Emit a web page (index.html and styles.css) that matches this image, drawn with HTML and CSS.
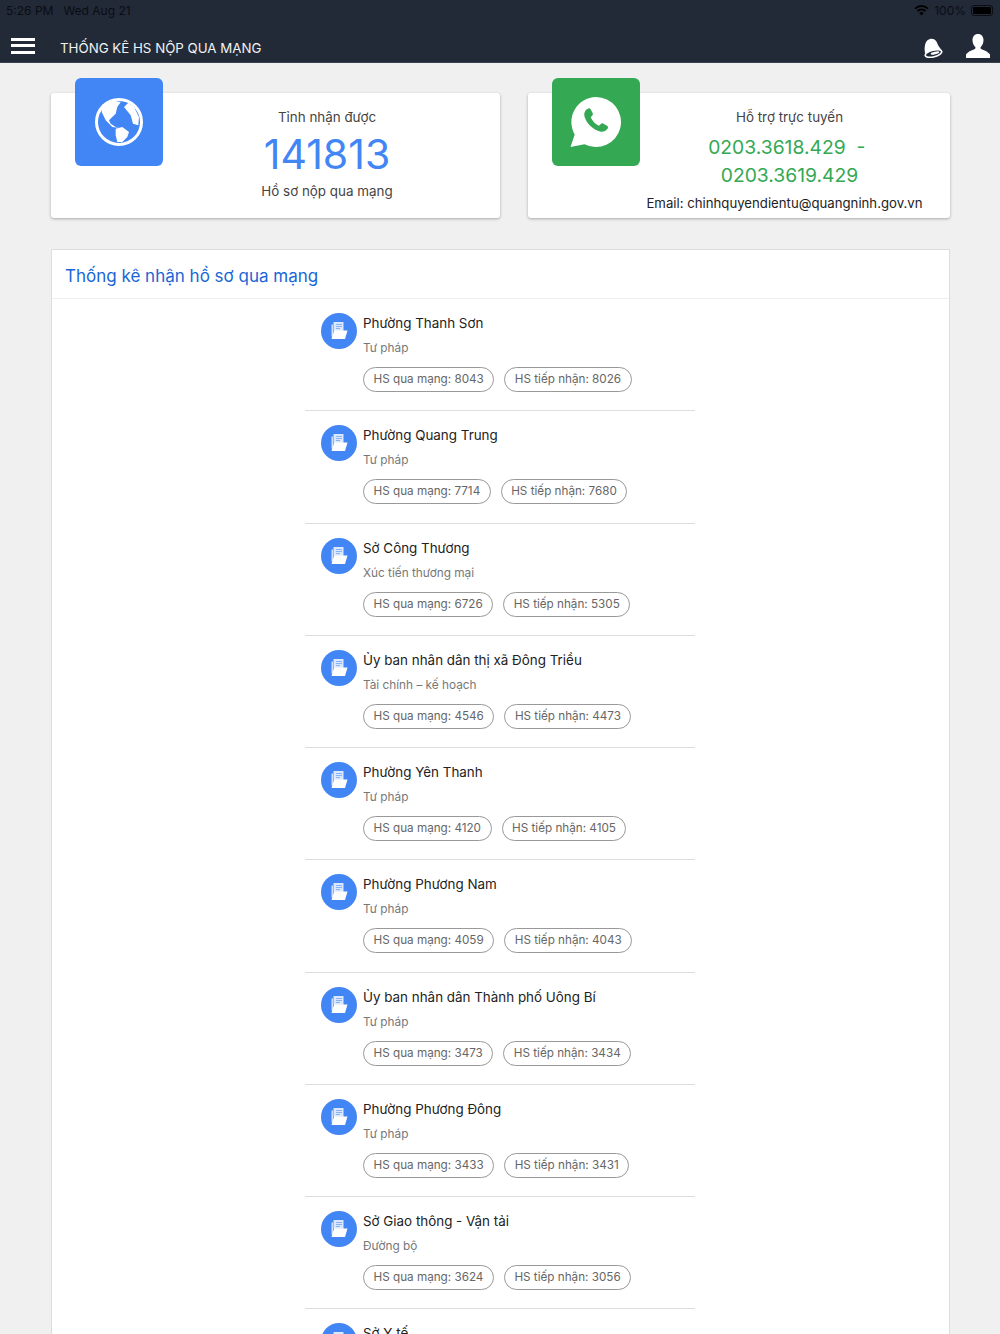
FILE: index.html
```html
<!DOCTYPE html>
<html lang="vi">
<head>
  <meta charset="UTF-8" />
  <title>Thống kê HS nộp qua mạng</title>
  <link rel="stylesheet" href="styles.css">
</head>
<body>

  <!-- Top bar -->
  <header class="topbar">
    <div class="status-bar">
      <span class="status-time">5:26 PM</span>
      <span class="status-date">Wed Aug 21</span>
      <span class="status-right">
        <svg class="wifi" viewBox="0 0 16 12" width="15" height="11"><path d="M8 11.500 5.600 8.700a3.400 3.400 0 0 1 4.800 0zM4.400 7.400 3 5.900a7 7 0 0 1 10 0l-1.400 1.500a5 5 0 0 0-7.200 0zM1.800 4.700.4 3.200a10.800 10.800 0 0 1 15.200 0l-1.400 1.500a8.800 8.800 0 0 0-12.400 0z" fill="#000"/></svg>
        <span>100%</span>
        <span class="battery"><span class="battery-fill"></span></span>
      </span>
    </div>
    <div class="nav-bar">
      <div class="menu-btn"><span></span><span></span><span></span></div>
      <div class="nav-title">THỐNG KÊ HS NỘP QUA MẠNG</div>
      <svg class="bell" viewBox="0 0 20 20" width="20" height="20">
        <path d="M2 15C1 9 2 2 7 1c5-1 7 3 8 6 1 2 3 4 4 6z" fill="#fff"/>
        <ellipse cx="10.500" cy="15.500" rx="8.500" ry="3.400" transform="rotate(-14 10.500 15.500)" fill="#222a38" stroke="#fff" stroke-width="1.600"/>
        <ellipse cx="12" cy="15" rx="4.500" ry="1.200" transform="rotate(-14 12 15)" fill="#fff"/>
      </svg>
      <svg class="user" viewBox="0 0 24 24" width="24" height="24">
        <path d="M12 0c3.600 0 5.500 2.700 5.500 6 0 2.800-1 5.300-2.700 7-.6.700-.4 1.600.4 2 2.500 1.200 7 2.600 8.800 5.600V24H0v-3.400c1.800-3 6.300-4.400 8.800-5.600.8-.4 1-1.300.4-2-1.700-1.700-2.700-4.200-2.700-7 0-3.300 1.900-6 5.500-6z" fill="#fff"/>
      </svg>
    </div>
  </header>

  <main class="content">

    <!-- Summary cards -->
    <section class="cards">
      <div class="card card-blue">
        <div class="card-tile tile-blue">
          <svg viewBox="0 0 48 48" width="48" height="48">
            <circle cx="24" cy="24" r="22.500" fill="none" stroke="#fff" stroke-width="3"/>
            <path d="M7.300 6.700 15.700 2.300 25.700 4 22.300 9 20.700 15.700 17.300 19 14 22.300 15.700 25.700 20.700 29 24.700 30 17.300 29 10.700 22.300 6.700 14z" fill="#fff"/>
            <path d="M20.700 30.700 27.300 29 34 34 32.300 39 27.300 44 22.300 44 20.700 37.300z" fill="#fff"/>
            <path d="M33.300 4.700 39 9 44 19 43.300 27.300 38 25.700 35.700 17.300 29 9z" fill="#fff"/>
          </svg>
        </div>
        <div class="card-body">
          <div class="card-label">Tỉnh nhận được</div>
          <div class="card-number">141813</div>
          <div class="card-label">Hồ sơ nộp qua mạng</div>
        </div>
      </div>

      <div class="card card-green">
        <div class="card-tile tile-green">
          <svg viewBox="0 0 52 52" width="52" height="52">
            <path d="M26 1a25 25 0 1 1-11.500 47.200L.5 51l4.200-12.500A25 25 0 0 1 26 1z" fill="#fff"/>
            <path d="M17.500 13c1-1 2.500-1 3.200.3l2 4c.4.800.2 1.600-.4 2.200l-1.600 1.700c1.500 3.500 4.500 6.800 8.300 8.500l1.800-1.800c.6-.6 1.400-.7 2.200-.3l4 2.200c1.200.7 1.300 2 .5 3-2 2.600-4.500 3.600-7.500 2.700-7.500-2.300-13.500-8-15.500-15-.8-3 .2-5.500 2.500-7.500z" fill="#34a853"/>
          </svg>
        </div>
        <div class="card-body">
          <div class="card-label">Hỗ trợ trực tuyến</div>
          <div class="card-phone">0203.3618.429&nbsp; -&nbsp;<br>0203.3619.429</div>
          <div class="card-email">Email: chinhquyendientu@quangninh.gov.vn</div>
        </div>
      </div>
    </section>

    <!-- Statistic list -->
    <section class="panel">
      <h2 class="panel-title">Thống kê nhận hồ sơ qua mạng</h2>
      <ul class="stat-list" id="stat-list"></ul>
    </section>
  </main>

  <script>
    const rows = [
      ["Phường Thanh Sơn", "Tư pháp", 8043, 8026],
      ["Phường Quang Trung", "Tư pháp", 7714, 7680],
      ["Sở Công Thương", "Xúc tiến thương mại", 6726, 5305],
      ["Ủy ban nhân dân thị xã Đông Triều", "Tài chính – kế hoạch", 4546, 4473],
      ["Phường Yên Thanh", "Tư pháp", 4120, 4105],
      ["Phường Phương Nam", "Tư pháp", 4059, 4043],
      ["Ủy ban nhân dân Thành phố Uông Bí", "Tư pháp", 3473, 3434],
      ["Phường Phương Đông", "Tư pháp", 3433, 3431],
      ["Sở Giao thông - Vận tải", "Đường bộ", 3624, 3056],
      ["Sở Y tế"]
    ];

    const folderIcon = `<svg viewBox="0 0 20 20" width="20" height="20">
        <path d="M2.500 3.500h1.500v12H2.500z" fill="#cfe0fc"/>
        <path d="M4.500 1h10v9h-10z" fill="#dbe7fd"/>
        <path d="M7 3.500h6M7 5.500h6M7 7.500h4" stroke="#8ab4f8" stroke-width="1"/>
        <path d="M5 9.500h13.500L16 18H2.500z" fill="#fff"/>
      </svg>`;

    // Build the rows (the last one is cut off by the window, name only)
    let output = "";
    rows.forEach((r) => {
      let details = "";
      if (r.length > 1) {
        details = `<div class="stat-field">${r[1]}</div>
            <div class="stat-pills">
              <span class="pill">HS qua mạng: ${r[2]}</span>
              <span class="pill">HS tiếp nhận: ${r[3]}</span>
            </div>`;
      }
      output += `<li class="stat-item">
          <div class="stat-icon">${folderIcon}</div>
          <div class="stat-text">
            <div class="stat-name">${r[0]}</div>
            ${details}
          </div>
        </li>`;
    });
    document.getElementById("stat-list").innerHTML = output;
  </script>
</body>
</html>
```

FILE: styles.css
```css
/* Basic Reset */
* {
  margin: 0;
  padding: 0;
  box-sizing: border-box;
}

html, body {
  height: 1334px;
  overflow: hidden;
}

body {
  font-family: Inter, "Noto Sans", Arial, sans-serif;
  background: #f0f0f0;
  color: #333;
}

/* Top bar */
.topbar {
  height: 63px;
  background: #222a38;
  border-bottom: 1px solid #3a4150;
}

.status-bar {
  display: flex;
  align-items: center;
  height: 20px;
  padding: 0 7px 0 6px;
  font-size: 12px;
  color: #0b0d12;
}

.status-date {
  margin-left: 10px;
}

.status-right {
  display: flex;
  align-items: center;
  gap: 5px;
  margin-left: auto;
}

.battery {
  display: block;
  width: 22px;
  height: 11px;
  padding: 1px;
  border: 1px solid #0b0d12;
  border-radius: 3px;
}

.battery-fill {
  display: block;
  height: 100%;
  background: #000;
  border-radius: 1px;
}

.nav-bar {
  display: flex;
  align-items: center;
  height: 42px;
  padding: 11px 11px 0;
}

.menu-btn {
  display: flex;
  flex-direction: column;
  gap: 3.500px;
  width: 24px;
  margin-top: -2px;
}

.menu-btn span {
  display: block;
  height: 3px;
  background: #fff;
}

.nav-title {
  margin-left: 25px;
  font-size: 13.300px;
  color: #f2f2f2;
  margin-top: 3px;
}

.bell {
  margin-left: auto;
  margin-top: 2px;
}

.user {
  margin-left: 23px;
  margin-top: -2px;
  margin-right: -1px;
}

/* Page body */
.content {
  height: 1271px;
  overflow: hidden;
  padding: 30px 50px 0 51px;
}

.cards {
  display: flex;
  gap: 28px;
}

.card {
  position: relative;
  height: 125px;
  background: #fff;
  border-radius: 3px;
  box-shadow: 0 1px 3px rgba(0, 0, 0, 0.3);
}

.card-blue {
  width: 449px;
  padding-left: 103px;
}

.card-green {
  width: 422px;
  padding-left: 101px;
}

/* Icon tile hangs over the card's top edge */
.card-tile {
  position: absolute;
  top: -15px;
  left: 24px;
  display: flex;
  align-items: center;
  justify-content: center;
  width: 88px;
  height: 88px;
  border-radius: 6px;
}

.tile-blue {
  background: #4285f4;
}

.tile-green {
  background: #34a853;
}

.card-body {
  padding-top: 16px;
  text-align: center;
}

.card-label {
  font-size: 13.400px;
  line-height: 17px;
  color: #444;
}

.card-number {
  margin: 5px 0 5px;
  font-size: 41px;
  line-height: 47px;
  color: #4285f4;
}

.card-phone {
  margin-top: 7px;
  font-size: 19.300px;
  line-height: 28px;
  color: #34a853;
}

.card-email {
  margin-top: 6px;
  padding-right: 10px;
  font-size: 13.200px;
  line-height: 17px;
  color: #222;
  white-space: nowrap;
}

/* Statistic panel */
.panel {
  margin-top: 31px;
  background: #fff;
  border: 1px solid #ddd;
  border-bottom: 0;
}

.panel-title {
  height: 49px;
  padding: 14px 14px 0 13px;
  font-size: 17px;
  line-height: 24px;
  font-weight: 400;
  color: #1a66d6;
  border-bottom: 1px solid #eee;
}

.stat-list {
  width: 390px;
  margin-left: 253px;
  list-style-type: none;
}

.stat-item {
  display: flex;
  height: 112.250px;
  padding: 14px 16px 0;
  border-bottom: 1px solid #ddd;
}

.stat-icon {
  display: flex;
  align-items: center;
  justify-content: center;
  flex: none;
  width: 36px;
  height: 36px;
  border-radius: 50%;
  background: #4285f4;
}

.stat-text {
  margin-left: 6px;
}

.stat-name {
  font-size: 13.400px;
  line-height: 20px;
  color: #222;
}

.stat-field {
  margin-top: 6px;
  font-size: 11.800px;
  line-height: 18px;
  color: #777;
}

.stat-pills {
  display: flex;
  gap: 10px;
  margin-top: 10px;
}

.pill {
  height: 25px;
  padding: 0 9.500px;
  font-size: 11.700px;
  line-height: 23px;
  color: #666;
  border: 1px solid #999;
  border-radius: 13px;
  white-space: nowrap;
}
```
